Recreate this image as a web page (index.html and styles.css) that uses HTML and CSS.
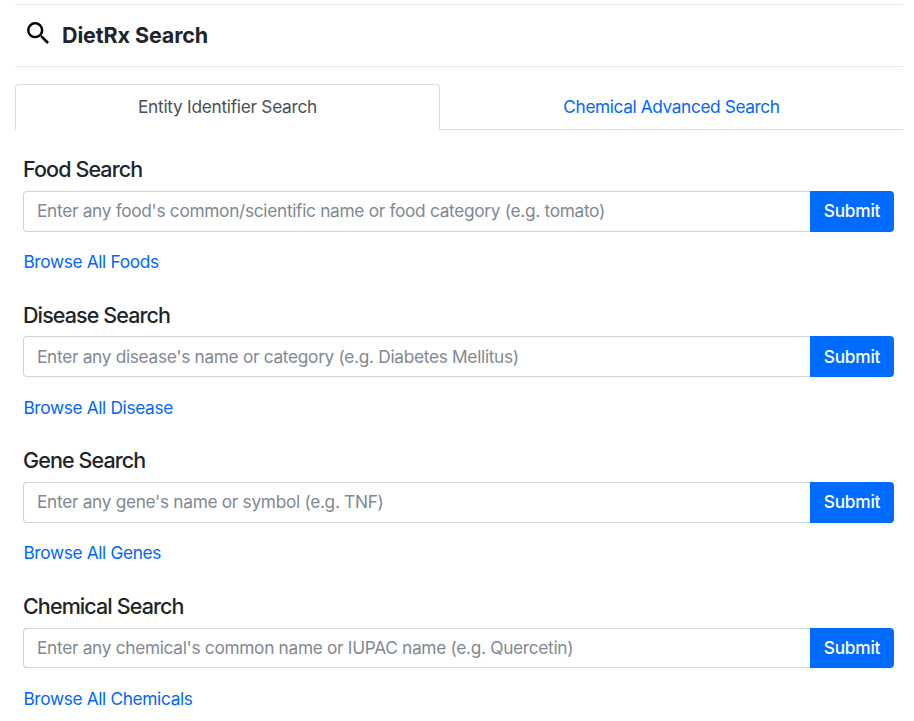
FILE: index.html
```html
<!DOCTYPE html>
<html lang="en">
<head>
<meta charset="utf-8">
<title>DietRx Search</title>
<link rel="stylesheet" href="styles.css">
</head>
<body>
<main class="page">
  <header class="header">
    <svg class="search-icon" viewBox="3 3 17.5 17.5" aria-hidden="true"><path d="M15.5 14h-.79l-.28-.27A6.471 6.471 0 0 0 16 9.5 6.5 6.5 0 1 0 9.5 16c1.61 0 3.09-.59 4.23-1.57l.27.28v.79l5 4.99L20.49 19l-4.99-5zm-6 0C7.01 14 5 11.99 5 9.5S7.01 5 9.5 5 14 7.01 14 9.5 11.99 14 9.5 14z"/></svg>
    <h1 class="title">DietRx Search</h1>
  </header>
  <nav class="tabs">
    <a class="tab active">Entity Identifier Search</a>
    <a class="tab">Chemical Advanced Search</a>
  </nav>
  <section class="group">
    <h2>Food Search</h2>
    <div class="field"><div class="input">Enter any food's common/scientific name or food category (e.g. tomato)</div><button class="submit">Submit</button></div>
    <a class="browse">Browse All Foods</a>
  </section>
  <section class="group">
    <h2>Disease Search</h2>
    <div class="field"><div class="input">Enter any disease's name or category (e.g. Diabetes Mellitus)</div><button class="submit">Submit</button></div>
    <a class="browse">Browse All Disease</a>
  </section>
  <section class="group">
    <h2>Gene Search</h2>
    <div class="field"><div class="input">Enter any gene's name or symbol (e.g. TNF)</div><button class="submit">Submit</button></div>
    <a class="browse">Browse All Genes</a>
  </section>
  <section class="group">
    <h2>Chemical Search</h2>
    <div class="field"><div class="input">Enter any chemical's common name or IUPAC name (e.g. Quercetin)</div><button class="submit">Submit</button></div>
    <a class="browse">Browse All Chemicals</a>
  </section>
</main>
</body>
</html>
```
FILE: styles.css
```css
* { box-sizing: border-box; }
body {
  margin: 0;
  height: 721px;
  overflow: hidden;
  background: #fff;
  color: #212529;
  font: 17.3px/26px Inter, "Liberation Sans", sans-serif;
  letter-spacing: -0.4px;
}
.page { margin: 4px 11px 0 15px; }
.header {
  display: flex;
  height: 63px;
  padding-left: 11.5px;
  border-top: 1px solid #e8e8e8;
  border-bottom: 1px solid #e8e8e8;
}
.search-icon { width: 22px; height: 22px; margin-top: 17px; fill: #000; }
.title {
  margin: 16px 0 0 13.5px;
  font-size: 21.5px;
  line-height: 28px;
  font-weight: 700;
  letter-spacing: -0.12px;
}
.tabs { display: flex; height: 46px; margin-top: 17px; }
.tab {
  flex: 1;
  padding: 10px 0 0;
  text-align: center;
  color: #0066ff;
  border-bottom: 1px solid #dadcde;
}
.tab.active {
  flex: 0 0 425px;
  color: #495057;
  border: 1px solid #dadcde;
  border-bottom: 0;
  border-radius: 4px 4px 0 0;
  padding-top: 9px;
  letter-spacing: -0.28px;
}
.group { height: 145.65px; padding: 26px 9px 0 8px; }
h2 {
  margin: 0 0 7.8px;
  font-size: 21.5px;
  line-height: 27px;
  font-weight: 500;
  letter-spacing: -0.9px;
}
.field { display: flex; height: 40.72px; }
.input {
  flex: 1;
  padding: 6.1px 13px;
  color: #7f8991;
  border: 1px solid #ced4da;
  border-right: 0;
  border-radius: 4px 0 0 4px;
  letter-spacing: -0.31px;
}
.submit {
  width: 84px;
  padding: 0 0 0.5px;
  border: 0;
  border-radius: 0 4px 4px 0;
  background: #006cff;
  color: #fff;
  font: inherit;
  font-weight: 500;
  letter-spacing: -0.2px;
}
.browse {
  display: block;
  margin-top: 17.4px;
  padding-left: 0.4px;
  color: #0066ff;
  letter-spacing: -0.35px;
}
```
